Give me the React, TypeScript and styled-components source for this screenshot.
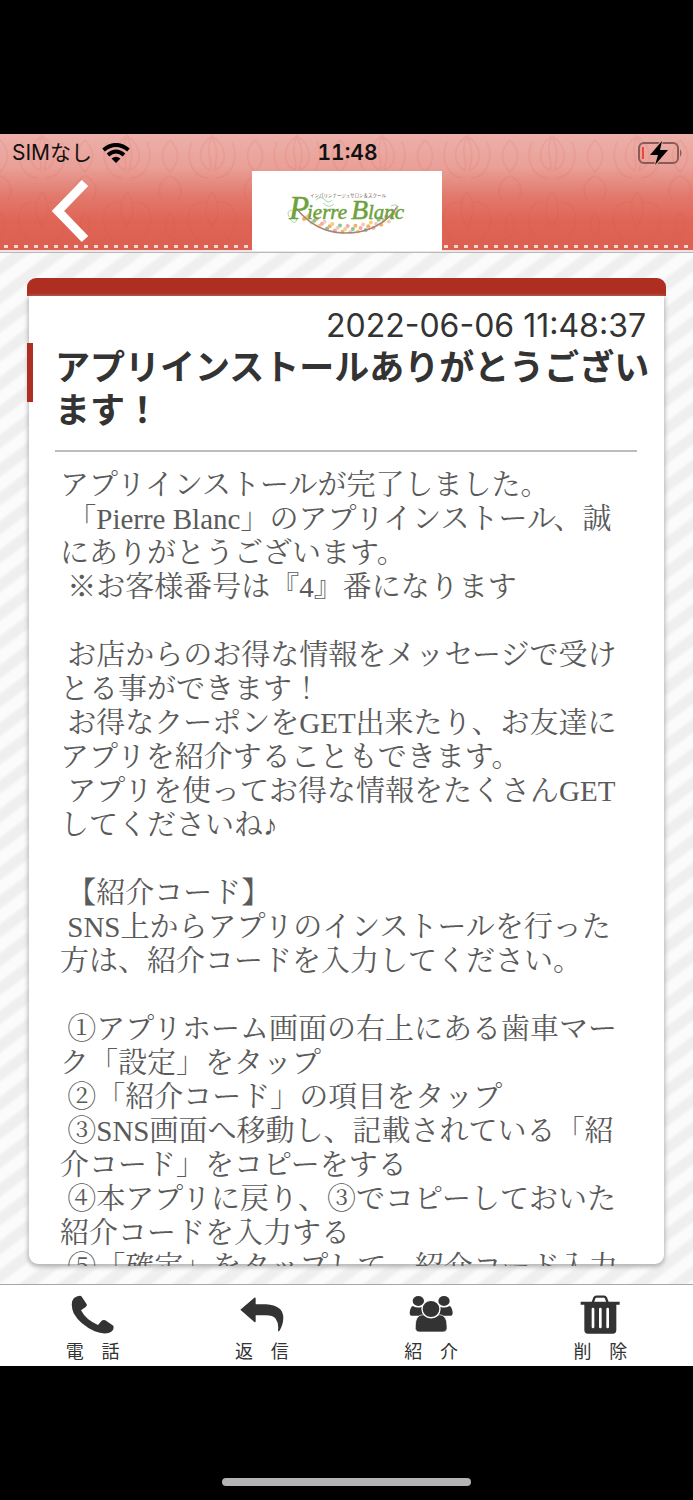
import React from 'react';
import styled, { createGlobalStyle } from 'styled-components';

const sans = `"Inter", "Noto Sans CJK JP", sans-serif`;

const GlobalStyle = createGlobalStyle`
  * { box-sizing: border-box; }
  html, body { margin: 0; background: #000; }
`;

const Device = styled.div`
  display: flex;
  flex-direction: column;
  height: 100vh;
  padding-top: 134px;
  background: #000;
  color: #333;
  font-family: ${sans};
`;

const Screen = styled.main`
  flex: 1;
  min-height: 0;
  display: flex;
  flex-direction: column;
  background: repeating-linear-gradient(
    143deg,
    #fbfbfb 0 8px,
    #efefef 12px 19px,
    #fbfbfb 23px
  );
`;

const Header = styled.header`
  position: relative;
  flex: none;
  height: 119px;
  border-bottom: 1px solid #b9b9b9;
  box-shadow: inset 0 -2px #efe6e4;
  background:
    repeating-linear-gradient(90deg, #f7d9d4 0 4px, transparent 4px 10px) 4px 111px / 100% 3px no-repeat,
    linear-gradient(#ecb0aa 0, #e9a098 28%, #e27a6d 52%, #df6556 74%, #dc5f50 100%);
`;

const Ornament = styled.svg`
  position: absolute;
  inset: 0;
  width: 100%;
  height: 110px;
`;

const StatusBar = styled.div`
  position: relative;
  display: grid;
  grid-template-columns: 1fr auto 1fr;
  align-items: center;
  height: 37px;
  padding: 0 10px 0 12px;
  color: #111;
  font-size: 21px;
  line-height: 36px;
`;

const Carrier = styled.span`
  display: flex;
  align-items: center;
  gap: 10px;
`;

const Clock = styled.time`
  font-weight: 600;
  font-variant-numeric: tabular-nums;
`;

const BatteryIcon = styled.svg`
  justify-self: end;
`;

const NavBar = styled.nav`
  position: relative;
  display: grid;
  grid-template-columns: 1fr 190px 1fr;
  height: 80px;
`;

const BackButton = styled.button`
  justify-self: start;
  margin-left: 48px;
  padding: 2px 0 0;
  border: 0;
  background: none;
  height: 80px;
`;

const LogoBox = styled.div`
  background: #fff;
  display: flex;
  align-items: center;
  justify-content: center;
`;

const Content = styled.div`
  flex: 1;
  min-height: 0;
  display: flex;
  flex-direction: column;
  padding: 25px 27px 20px;
`;

const CardBar = styled.div`
  flex: none;
  height: 18px;
  border-radius: 9px 9px 0 0;
  background: #ae2f22;
`;

const Card = styled.article`
  flex: 1;
  min-height: 0;
  display: flex;
  flex-direction: column;
  margin: 0 2px;
  border-radius: 0 0 9px 9px;
  background: #fff;
  box-shadow: 0 2px 4px 1px #b4b4b4;
`;

const DateLine = styled.time`
  padding: 10px 18px 0;
  text-align: right;
  font-size: 32px;
  line-height: 40px;
`;

const TitleBlock = styled.div`
  display: flex;
  align-items: flex-start;
  margin-left: -2px;
  padding-bottom: 18px;
`;

const Accent = styled.span`
  flex: none;
  width: 6px;
  height: 59px;
  margin-top: -3px;
  background: #ae2f22;
`;

const Title = styled.h1`
  margin: 0;
  padding: 0 12px 0 22px;
  font-family: "Liberation Sans", "Noto Sans CJK JP", sans-serif;
  font-size: 35px;
  line-height: 43px;
  font-weight: 700;
`;

const Divider = styled.hr`
  width: calc(100% - 53px);
  margin: 0 27px 0 26px;
  border: 0;
  border-top: 2px solid #bdbdbd;
`;

const Message = styled.div`
  flex: 1;
  min-height: 0;
  overflow-y: auto;
  scrollbar-width: none;
  margin: 16px 30px -2px 31px;
  color: #5a5a5a;
  font-family: "Liberation Serif", "Noto Serif CJK JP", "Noto Sans CJK JP", serif;
  font-size: 29px;
  line-height: 34px;
  white-space: pre-wrap;
  text-spacing-trim: space-all;
`;

const TabBar = styled.nav`
  flex: none;
  display: grid;
  grid-template-columns: repeat(4, 1fr);
  height: 82px;
  padding: 0 8px;
  border-top: 1px solid #a6a6a6;
  background: #fff;
`;

const TabButton = styled.button`
  display: flex;
  flex-direction: column;
  align-items: center;
  padding: 10px 0 0;
  border: 0;
  background: none;
  color: #333;
  font-family: "Noto Sans CJK JP", sans-serif;
  font-size: 18px;
  line-height: 24px;
  gap: 3px;
`;

const HomeArea = styled.footer`
  flex: none;
  display: flex;
  align-items: flex-end;
  justify-content: center;
  height: 134px;
  padding-bottom: 14px;
`;

const HomeIndicator = styled.span`
  width: 36%;
  height: 8px;
  border-radius: 4px;
  background: #b4b4b4;
`;

const message = `アプリインストールが完了しました。
 「Pierre Blanc」のアプリインストール、誠にありがとうございます。
 ※お客様番号は『4』番になります

 お店からのお得な情報をメッセージで受けとる事ができます！
 お得なクーポンをGET出来たり、お友達にアプリを紹介することもできます。
 アプリを使ってお得な情報をたくさんGETしてくださいね♪

 【紹介コード】
 SNS上からアプリのインストールを行った方は、紹介コードを入力してください。

 ①アプリホーム画面の右上にある歯車マーク「設定」をタップ
 ②「紹介コード」の項目をタップ
 ③SNS画面へ移動し、記載されている「紹介コード」をコピーをする
 ④本アプリに戻り、③でコピーしておいた紹介コードを入力する
 ⑤「確定」をタップして、紹介コード入力`;

const PhoneIcon = () => (
  <svg width="44" height="40" viewBox="213 283 132 120" fill="currentColor" aria-hidden="true">
    <path d="M222 292Q236 284 243 286Q246 288 260 311Q262 315 257 319L243 329Q258 358 294 373L305 360Q310 356 316 359L340 375Q344 390 328 396Q310 402 284 392Q240 372 221 338Q209 306 222 292Z" />
  </svg>
);

const ReplyIcon = () => (
  <svg width="44" height="40" viewBox="722 283 132 120" fill="currentColor" aria-hidden="true">
    <path d="M723 327L765 291Q769 289 769 294V311H800Q852 314 852 352Q851 374 840 391Q836 394 836 389Q839 368 829 354Q820 344 800 344H769V361Q769 367 765 364Z" />
  </svg>
);

const PeopleIcon = () => (
  <svg width="44" height="40" viewBox="202 283 132 120" fill="currentColor" aria-hidden="true">
    <ellipse cx="230" cy="301" rx="17" ry="15" />
    <ellipse cx="307" cy="301" rx="17" ry="15" />
    <path d="M213 316Q229 324 241 318L248 345H210Q204 345 204 336Q206 319 213 316Z" />
    <path d="M324 316Q308 324 296 318L289 345H327Q333 345 333 336Q331 319 324 316Z" />
    <path d="M221 376Q221 343 244 342Q268 362 293 342Q316 343 316 376Q318 394 303 394H234Q219 394 221 376Z" stroke="#fff" strokeWidth="2" />
    <ellipse cx="268" cy="325" rx="27" ry="26" stroke="#fff" strokeWidth="4" />
  </svg>
);

const TrashIcon = () => (
  <svg width="44" height="40" viewBox="706 283 132 120" fill="currentColor" aria-hidden="true">
    <path d="M750 306L755 292Q757 288 761 288H784Q788 288 790 292L795 306" fill="none" stroke="currentColor" strokeWidth="7" />
    <path d="M714 303H831V312H821V388Q821 399 810 399H736Q725 399 725 388V312H714Z" />
    <path d="M751 325V379M773 325V379M795 325V379" stroke="#fff" strokeWidth="8" strokeLinecap="round" />
  </svg>
);

const tabs = [
  { label: '電　話', Icon: PhoneIcon },
  { label: '返　信', Icon: ReplyIcon },
  { label: '紹　介', Icon: PeopleIcon },
  { label: '削　除', Icon: TrashIcon },
];

const flowerColors = ['#f0b06a', '#f2a9a4', '#7fc99a', '#f3cf7a', '#f6c9c0'];

const flowers = Array.from({ length: 36 }, (_, i) => {
  const t = i / 35;
  return {
    x: 17 + t * 90,
    y: 24 + 16 * Math.sin(Math.PI * (0.06 + t * 0.88)) - (i % 3) * 3,
    color: flowerColors[(i * 3) % flowerColors.length],
  };
});

const Logo = () => (
  <svg width="120" height="56" viewBox="0 -9 120 56" role="img" aria-label="Pierre Blanc">
    {flowers.map((f, i) => (
      <circle key={i} cx={f.x} cy={f.y} r="2" fill={f.color} />
    ))}
    <path d="M9 16Q28 40 56 41Q92 42 111 14" fill="none" stroke="#a98574" strokeWidth="1.500" />
    <path d="M2 25Q-1 19 5 18M3 27Q8 34 10 27M29 8Q34 3 38 8Q42 12 45 8M36 11Q42 17 47 12M104 14Q112 10 110 19" fill="none" stroke="#a5d6a9" strokeWidth="1" />
    <g fill="#6da23c" stroke="#6da23c" strokeWidth="0.500" fontFamily="Liberation Serif, serif" fontStyle="italic">
      <text x="2" y="27" fontSize="33">P</text>
      <text x="20" y="27" fontSize="21">ierre</text>
      <text x="64" y="27" fontSize="28">B</text>
      <text x="81" y="27" fontSize="21">lanc</text>
    </g>
    <text x="23" y="5" fontSize="4.500" fill="#6b5549" fontFamily="Noto Sans CJK JP, sans-serif">インパリンナージュサロン＆スクール</text>
  </svg>
);

export default function App() {
  return (
    <Device>
      <GlobalStyle />
      <Screen>
        <Header>
          <Ornament aria-hidden="true">
            <defs>
              <pattern id="damask" x="0" y="-10" width="85" height="120" patternUnits="userSpaceOnUse">
                <g fill="none" stroke="#d0452f" strokeOpacity="0.09" strokeWidth="2">
                  <path d="M42 12C26 22 28 42 40 46C44 38 34 30 42 12C50 30 46 38 44 46C58 42 58 22 42 12" />
                  <path d="M22 18C14 36 24 54 38 54M62 18C70 36 60 54 46 54M0 52C10 56 14 66 8 76M85 52C75 56 71 66 77 76" />
                  <path d="M42 68C34 78 34 92 42 102C50 92 50 78 42 68M36 78C14 76 14 104 28 116M48 78C70 76 70 104 56 116" />
                  <path d="M0 16C10 26 10 38 0 48M85 16C75 26 75 38 85 48M0 88C6 96 6 106 0 114M85 88C79 96 79 106 85 114" />
                </g>
              </pattern>
            </defs>
            <rect width="100%" height="100%" fill="url(#damask)" />
          </Ornament>
          <StatusBar>
            <Carrier>
              SIMなし
              <svg width="28" height="20" viewBox="0 0 28 20" aria-label="Wi-Fi">
                <g fill="none" stroke="#000" strokeWidth="4">
                  <path d="M1.500 7Q14 -3 26.500 7" />
                  <path d="M6 12Q14 5 22 12" />
                </g>
                <path d="M9.500 15.500Q14 12 18.500 15.500L14 20Z" fill="#000" />
              </svg>
            </Carrier>
            <Clock>11:48</Clock>
            <BatteryIcon width="45" height="24" viewBox="0 0 45 24" aria-label="充電中">
              <rect x="1" y="2" width="39" height="20" rx="5" fill="none" stroke="#8a5a57" strokeWidth="2" />
              <path d="M42 8Q45 12 42 16Z" fill="#8a5a57" />
              <path d="M5 6V18" stroke="#f0463c" strokeWidth="2" />
              <path d="M24 0L12 14H20L17 24L30 9H22Z" fill="#000" stroke="#e8a39c" strokeWidth="2" paintOrder="stroke" />
            </BatteryIcon>
          </StatusBar>
          <NavBar>
            <BackButton aria-label="戻る">
              <svg width="44" height="68" viewBox="0 0 44 68">
                <path d="M37 6L10 34L37 62" fill="none" stroke="#fff" strokeWidth="9" />
              </svg>
            </BackButton>
            <LogoBox>
              <Logo />
            </LogoBox>
          </NavBar>
        </Header>
        <Content>
          <CardBar />
          <Card>
            <DateLine dateTime="2022-06-06T11:48:37">2022-06-06 11:48:37</DateLine>
            <TitleBlock>
              <Accent />
              <Title>アプリインストールありがとうございます！</Title>
            </TitleBlock>
            <Divider />
            <Message>{message}</Message>
          </Card>
        </Content>
        <TabBar>
          {tabs.map(({ label, Icon }) => (
            <TabButton key={label}>
              <Icon />
              {label}
            </TabButton>
          ))}
        </TabBar>
      </Screen>
      <HomeArea>
        <HomeIndicator />
      </HomeArea>
    </Device>
  );
}
